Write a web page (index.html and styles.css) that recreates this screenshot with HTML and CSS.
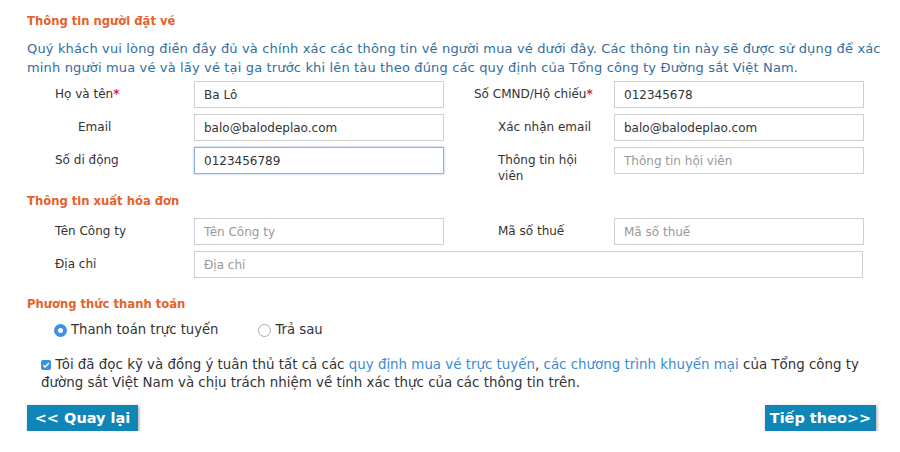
FILE: index.html
```html
<!DOCTYPE html>
<html lang="vi">
<head>
<meta charset="utf-8">
<title>Thông tin người đặt vé</title>
<link rel="stylesheet" href="styles.css">
</head>
<body>
<div class="page">
  <h2 class="section-title first">Thông tin người đặt vé</h2>
  <p class="intro">Quý khách vui lòng điền đầy đủ và chính xác các thông tin về người mua vé dưới đây. Các thông tin này sẽ được sử dụng để xác minh người mua vé và lấy vé tại ga trước khi lên tàu theo đúng các quy định của Tổng công ty Đường sắt Việt Nam.</p>

  <div class="grid">
    <label class="lbl l1">Họ và tên<span class="req">*</span></label>
    <input class="inp" type="text" value="Ba Lô">
    <label class="lbl r1">Số CMND/Hộ chiếu<span class="req">*</span></label>
    <input class="inp" type="text" value="012345678">

    <label class="lbl l2">Email</label>
    <input class="inp" type="text" value="balo@balodeplao.com">
    <label class="lbl r2">Xác nhận email</label>
    <input class="inp" type="text" value="balo@balodeplao.com">

    <label class="lbl l1">Số di động</label>
    <input class="inp focus" type="text" value="0123456789">
    <label class="lbl r2 wrap">Thông tin hội viên</label>
    <input class="inp" type="text" placeholder="Thông tin hội viên">
  </div>

  <h2 class="section-title second">Thông tin xuất hóa đơn</h2>
  <div class="grid invoice">
    <label class="lbl l1">Tên Công ty</label>
    <input class="inp" type="text" placeholder="Tên Công ty">
    <label class="lbl r2">Mã số thuế</label>
    <input class="inp" type="text" placeholder="Mã số thuế">

    <label class="lbl l1">Địa chỉ</label>
    <input class="inp wide" type="text" placeholder="Địa chỉ">
  </div>

  <h2 class="section-title third">Phương thức thanh toán</h2>
  <div class="payments">
    <label class="pay"><span class="radio on"></span>Thanh toán trực tuyến</label>
    <label class="pay"><span class="radio"></span>Trả sau</label>
  </div>

  <p class="agree"><span class="check"><svg viewBox="0 0 10 10" width="10" height="10"><rect x="0" y="0" width="10" height="10" rx="2" fill="#3b8fe6"/><path d="M2.3 5.2 L4.2 7 L7.8 3" fill="none" stroke="#fff" stroke-width="1.5"/></svg></span> Tôi đã đọc kỹ và đồng ý tuân thủ tất cả các <a href="#">quy định mua vé trực tuyến</a>, <a href="#">các chương trình khuyến mại</a> của Tổng công ty đường sắt Việt Nam và chịu trách nhiệm về tính xác thực của các thông tin trên.</p>

  <div class="actions">
    <button class="btn" type="button">&lt;&lt; Quay lại</button>
    <button class="btn" type="button">Tiếp theo&gt;&gt;</button>
  </div>
</div>
</body>
</html>
```
FILE: styles.css
```css
html, body {
  margin: 0;
  padding: 0;
  background: #fff;
}
body {
  font-family: "DejaVu Sans", Verdana, sans-serif;
  color: #333;
}
.page {
  padding: 13px 15px 0 27px;
}
.section-title {
  margin: 0;
  font-size: 11.6px;
  line-height: 16px;
  font-weight: bold;
  color: #e5622a;
}
.section-title.second { margin-top: 9px; }
.section-title.third { margin-top: 18px; }
.intro {
  margin: 10px 0 4px;
  font-size: 13px;
  line-height: 19px;
  letter-spacing: 0.15px;
  color: #326e9d;
}
.grid {
  display: grid;
  grid-template-columns: 167px 250px 170px 250px;
  row-gap: 6px;
}
.grid.invoice { margin-top: 9px; }
.lbl {
  font-size: 12px;
  line-height: 16px;
  padding-top: 5px;
  color: #333;
}
.lbl.l1 { padding-left: 28px; }
.lbl.l2 { padding-left: 51px; }
.lbl.r1 { padding-left: 30px; }
.lbl.r2 { padding-left: 54px; padding-right: 20px; }
.req { color: #e0262b; font-weight: bold; }
.inp {
  box-sizing: border-box;
  height: 27px;
  width: 250px;
  margin: 0;
  padding: 0 9px;
  border: 1px solid #cfcfcf;
  border-radius: 0;
  font-family: "DejaVu Sans", Verdana, sans-serif;
  font-size: 12px;
  color: #333;
  background: #fff;
  outline: none;
}
.inp::placeholder { color: #999; }
.inp.focus {
  border-color: #8db2dc;
  box-shadow: 0 0 2px rgba(80, 140, 210, 0.6);
}
.inp.wide {
  grid-column: 2 / 5;
  width: 669px;
}
.payments {
  display: flex;
  padding: 9px 0 0 27px;
  font-size: 13.2px;
  line-height: 18px;
}
.pay {
  display: flex;
  align-items: center;
}
.pay + .pay { margin-left: 40px; }
.radio {
  box-sizing: border-box;
  width: 13px;
  height: 13px;
  border-radius: 50%;
  border: 1px solid #aaa;
  background: #fff;
  margin-right: 4px;
}
.radio.on {
  border: 4.5px solid #3d8fe8;
  background: #fff;
}
.agree {
  margin: 17px 0 0 14px;
  font-size: 13.4px;
  line-height: 18px;
  color: #333;
}
.check {
  display: inline-block;
  vertical-align: -1px;
}
.check svg { display: block; }
.agree a {
  color: #3a8bd6;
  text-decoration: none;
}
.actions {
  display: flex;
  justify-content: space-between;
  margin-top: 13px;
  padding-right: 9px;
}
.btn {
  width: 111px;
  height: 26px;
  margin: 0;
  padding: 0;
  border: 0;
  border-radius: 0;
  background: #0f86b6;
  color: #fff;
  font-family: "DejaVu Sans", Verdana, sans-serif;
  font-size: 14.5px;
  font-weight: bold;
  box-shadow: 1px 1px 3px rgba(0, 0, 0, 0.35);
}
```
